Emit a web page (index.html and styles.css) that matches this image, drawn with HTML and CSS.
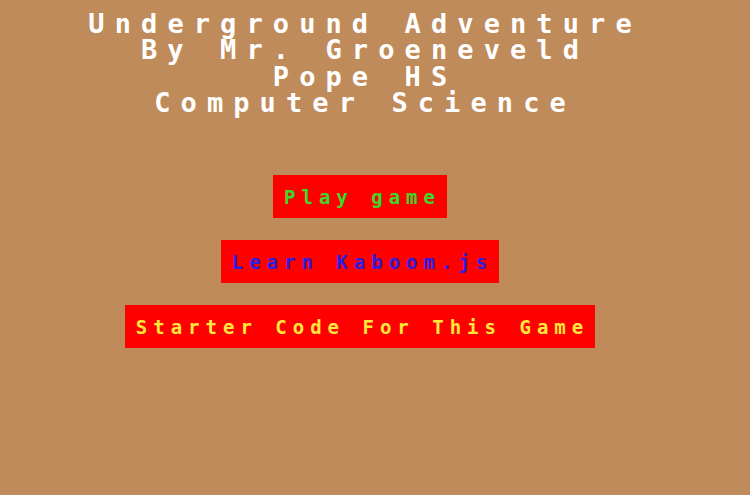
FILE: index.html
```html
<!DOCTYPE html>
<html lang="en">
<head>
<meta charset="utf-8">
<title>Underground Adventure</title>
<link rel="stylesheet" href="styles.css">
</head>
<body>
<main class="screen">
  <header class="title">
    <div class="title-line">Underground Adventure</div>
    <div class="title-line">By Mr. Groeneveld</div>
    <div class="title-line">Pope HS</div>
    <div class="title-line">Computer Science</div>
  </header>
  <nav class="menu">
    <a class="btn btn-play" href="#">Play game</a>
    <a class="btn btn-learn" href="#">Learn Kaboom.js</a>
    <a class="btn btn-starter" href="#">Starter Code For This Game</a>
  </nav>
</main>
</body>
</html>
```
FILE: styles.css
```css
html, body {
  margin: 0;
  padding: 0;
  height: 100%;
}

body {
  background: #c08b5a;
  font-family: "DejaVu Sans Mono", "Liberation Mono", monospace;
  font-weight: bold;
}

.screen {
  width: 720px;
  display: flex;
  flex-direction: column;
  align-items: center;
}

.title {
  padding-top: 11px;
  display: flex;
  flex-direction: column;
  align-items: center;
  color: #ffffff;
  font-size: 27px;
  line-height: 26.3px;
  letter-spacing: 10.1px;
  white-space: pre;
}

.title-line {
  padding-left: 10.1px;
}

.menu {
  margin-top: 59px;
  display: flex;
  flex-direction: column;
  align-items: center;
  gap: 22px;
}

.btn {
  display: flex;
  align-items: center;
  height: 43px;
  padding: 0 6px 0 11px;
  background: #ff0000;
  font-size: 19px;
  letter-spacing: 6px;
  text-decoration: none;
  white-space: pre;
}

.btn-play { color: #3ada2a; }
.btn-learn { color: #2a1ee0; }
.btn-starter { color: #ffe83a; }
```
